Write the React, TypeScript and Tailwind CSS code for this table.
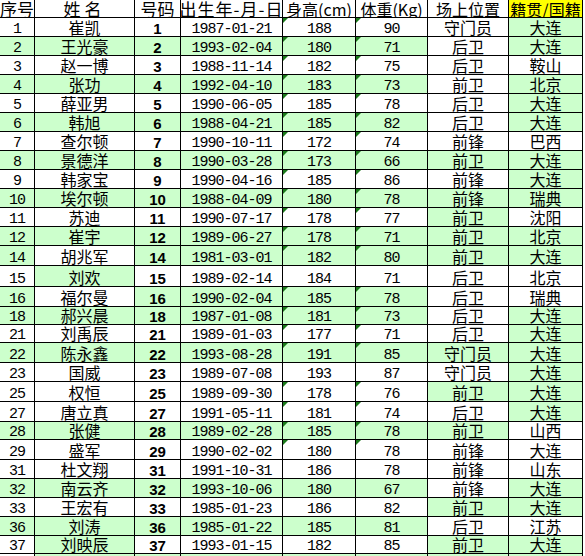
import React from "react";

// Player roster sheet, drawn as a spreadsheet grid.
type Row = {
  no: number;
  name: string;
  num: number;
  born: string;
  height: number;
  weight: number;
  pos: string;
  home: string;
  fill: string; // one letter per column: G = green, W = white
  mark: boolean; // little green corner flag on height / weight
  h: number;
};

const raw: [number, string, string, number, number, string, string, string, boolean, number][] = [
  [1, "崔凯", "1987-01-21", 188, 90, "守门员", "大连", "WWWWWWWG", true, 19],
  [2, "王光豪", "1993-02-04", 180, 71, "后卫", "大连", "GGGGGGWG", true, 19],
  [3, "赵一博", "1988-11-14", 182, 75, "后卫", "鞍山", "WWWWWWWW", true, 19],
  [4, "张功", "1992-04-10", 183, 73, "前卫", "北京", "GGGGGGWG", true, 19],
  [5, "薛亚男", "1990-06-05", 185, 78, "后卫", "大连", "WWWWWWWG", true, 19],
  [6, "韩旭", "1988-04-21", 185, 82, "后卫", "大连", "GGGGGGWG", true, 19],
  [7, "查尔顿", "1990-10-11", 172, 74, "前锋", "巴西", "WWWWWWWW", true, 19],
  [8, "景德洋", "1990-03-28", 173, 66, "前卫", "大连", "GGGGGGGG", true, 19],
  [9, "韩家宝", "1990-04-16", 185, 86, "前锋", "大连", "WWWWWWWG", true, 19],
  [10, "埃尔顿", "1988-04-09", 180, 78, "前锋", "瑞典", "GGGGGGGG", true, 19],
  [11, "苏迪", "1990-07-17", 178, 77, "前卫", "沈阳", "WWWWWWGW", true, 19],
  [12, "崔宇", "1989-06-27", 178, 71, "前卫", "北京", "GGGGGGGG", true, 19],
  [14, "胡兆军", "1981-03-01", 182, 80, "前卫", "大连", "GWGGGGGG", true, 20],
  [15, "刘欢", "1989-02-14", 184, 71, "后卫", "北京", "WGWWWWWW", false, 21],
  [16, "福尔曼", "1990-02-04", 185, 78, "后卫", "瑞典", "GWGGGGWW", true, 20],
  [18, "郝兴晨", "1987-01-08", 181, 73, "后卫", "大连", "GGGGGGWG", true, 18],
  [21, "刘禹辰", "1989-01-03", 177, 71, "后卫", "大连", "WWWWWWWG", true, 18],
  [22, "陈永鑫", "1993-08-28", 191, 85, "守门员", "大连", "GGGGGGGG", true, 20],
  [23, "国威", "1989-07-08", 193, 87, "守门员", "大连", "WWWWWWWG", false, 19],
  [25, "权恒", "1989-09-30", 178, 76, "前卫", "大连", "WWWWWWGG", true, 20],
  [27, "唐立真", "1991-05-11", 181, 74, "后卫", "大连", "WWWWWWWG", true, 20],
  [28, "张健", "1989-02-28", 185, 78, "前卫", "山西", "GGGGGGGW", true, 18],
  [29, "盛军", "1990-02-02", 180, 78, "前锋", "大连", "WWWWWWWW", true, 20],
  [31, "杜文翔", "1991-10-31", 186, 78, "前锋", "山东", "WWWWWWWW", false, 19],
  [32, "南云齐", "1993-10-06", 180, 67, "前锋", "大连", "GGGGGGWG", false, 19],
  [33, "王宏有", "1985-01-23", 186, 82, "前卫", "大连", "WWWWWWGG", false, 19],
  [36, "刘涛", "1985-01-22", 185, 81, "后卫", "江苏", "GGGGGGWW", false, 19],
  [37, "刘映辰", "1993-01-15", 182, 85, "前卫", "大连", "WGWWWWGG", false, 18],
];

const rows: Row[] = raw.map(([no, name, born, height, weight, pos, home, fill, mark, h]) => ({
  no,
  name,
  num: no,
  born,
  height,
  weight,
  pos,
  home,
  fill,
  mark,
  h,
}));

const heights: Record<number, string> = {
  3: "h-[3px]",
  17: "h-[17px]",
  18: "h-[18px]",
  19: "h-[19px]",
  20: "h-[20px]",
  21: "h-[21px]",
};

const COLS = "grid w-[583px] grid-cols-[35px_100px_46px_102px_73px_72px_81px_74px]";

const digits = "font-['Liberation_Mono',monospace] text-[15px] leading-[12px] tracking-[-1px] text-black";
const han = "font-['Noto_Sans_CJK_SC',sans-serif] text-[16px] leading-[16px] pb-[1px] text-black";
const bold = "font-['Liberation_Sans',Arial,sans-serif] text-[15px] font-bold leading-[12px] pb-[1px] text-black";

function Cell({
  green,
  mark,
  children,
}: {
  green: boolean;
  mark?: boolean;
  children?: React.ReactNode;
}) {
  return (
    <div
      className={`relative flex items-end justify-center whitespace-nowrap border-r border-b border-black ${
        green ? "bg-[#ccffcc]" : "bg-white"
      }`}
    >
      {mark && (
        <span className="absolute top-0 left-0 h-0 w-0 border-t-[5px] border-r-[5px] border-t-[#1a7a1a] border-r-transparent" />
      )}
      {children}
    </div>
  );
}

function Head({ yellow, children }: { yellow?: boolean; children: React.ReactNode }) {
  return (
    <div
      className={`flex items-end justify-center whitespace-nowrap border-r border-b border-black font-['Noto_Sans_CJK_SC',sans-serif] text-[16px] leading-[16px] text-black ${
        yellow ? "bg-[#ffff00]" : "bg-white"
      }`}
    >
      {children}
    </div>
  );
}

export default function App() {
  return (
    <div className="h-[556px] w-[585px] overflow-hidden bg-white">
      <div className={`${COLS} h-[18px]`}>
        <Head>
          <span className="text-[17px] leading-[17px]">序号</span>
        </Head>
        <Head>
          <span className="text-[17px] leading-[17px] tracking-[4px]">姓名</span>
        </Head>
        <Head>
          <span className="text-[17px] leading-[17px]">号码</span>
        </Head>
        <Head>
          <span className="text-[17px] leading-[17px] tracking-[1px]">出生年-月-日</span>
        </Head>
        <Head>身高(cm)</Head>
        <Head>体重(Kg)</Head>
        <Head>场上位置</Head>
        <Head yellow>籍贯/国籍</Head>
      </div>

      {rows.map((r) => {
        const g = (i: number) => r.fill[i] === "G";
        return (
          <div key={r.no} className={`${COLS} ${heights[r.h]}`}>
            <Cell green={g(0)}>
              <span className={digits}>{r.no}</span>
            </Cell>
            <Cell green={g(1)}>
              <span className={han}>{r.name}</span>
            </Cell>
            <Cell green={g(2)}>
              <span className={bold}>{r.num}</span>
            </Cell>
            <Cell green={g(3)}>
              <span className={digits}>{r.born}</span>
            </Cell>
            <Cell green={g(4)} mark={r.mark}>
              <span className={digits}>{r.height}</span>
            </Cell>
            <Cell green={g(5)} mark={r.mark}>
              <span className={digits}>{r.weight}</span>
            </Cell>
            <Cell green={g(6)}>
              <span className={han}>{r.pos}</span>
            </Cell>
            <Cell green={g(7)}>
              <span className={han}>{r.home}</span>
            </Cell>
          </div>
        );
      })}

      {/* next row, only its top edge shows */}
      <div className={`${COLS} ${heights[3]}`}>
        <Cell green={false} />
        <Cell green />
        <Cell green />
        <Cell green />
        <Cell green />
        <Cell green />
        <Cell green />
        <Cell green />
      </div>
    </div>
  );
}
